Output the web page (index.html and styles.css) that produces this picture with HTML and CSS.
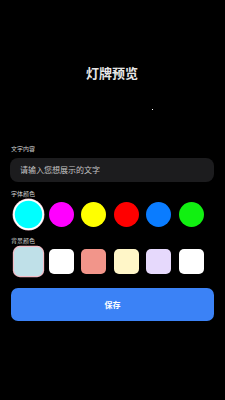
FILE: index.html
```html
<!DOCTYPE html>
<html lang="zh">
<head>
    <meta charset="UTF-8">
    <meta name="viewport" content="width=device-width, initial-scale=1.0">
    <title>灯牌预览</title>
    <link rel="stylesheet" href="styles.css">
</head>
<body>
    <div class="page">
        <h1 class="title">灯牌预览</h1>

        <div class="preview">
            <span class="dot"></span>
        </div>

        <p class="label">文字内容</p>
        <div class="input">请输入您想展示的文字</div>

        <p class="label label-gap">字体颜色</p>
        <div class="swatches">
            <span class="swatch circle selected" style="background:#00ffff"></span>
            <span class="swatch circle" style="background:#ff00ff"></span>
            <span class="swatch circle" style="background:#ffff00"></span>
            <span class="swatch circle" style="background:#ff0000"></span>
            <span class="swatch circle" style="background:#0a7cff"></span>
            <span class="swatch circle" style="background:#11f011"></span>
        </div>

        <p class="label label-gap2">背景颜色</p>
        <div class="swatches">
            <span class="swatch square selected" style="background:#bfe0e8"></span>
            <span class="swatch square" style="background:#ffffff"></span>
            <span class="swatch square" style="background:#f2958a"></span>
            <span class="swatch square" style="background:#fff6c8"></span>
            <span class="swatch square" style="background:#e6d9fc"></span>
            <span class="swatch square" style="background:#ffffff"></span>
        </div>

        <div class="save">保存</div>
    </div>
</body>
</html>
```

FILE: styles.css
```css
body {
    margin: 0;
    background: #000;
    font-family: "Noto Sans CJK SC", "Noto Sans", sans-serif;
    width: 225px;
    height: 400px;
    overflow: hidden;
}

.page {
    padding: 64px 11px 0 10px;
}

.title {
    margin: 0;
    font-size: 13px;
    line-height: 18px;
    font-weight: 700;
    text-align: center;
    color: #e6e6e6;
}

.preview {
    position: relative;
    height: 63px;
}

.dot {
    position: absolute;
    left: 142px;
    top: 27px;
    width: 1px;
    height: 1px;
    background: #fff;
}

.label {
    margin: 0;
    padding-left: 1px;
    font-size: 6px;
    line-height: 8px;
    color: #d0d0d0;
}

.label-gap {
    margin-top: 8px;
}

.label-gap2 {
    margin-top: 9px;
}

.input {
    margin-top: 5px;
    height: 24px;
    line-height: 24px;
    border-radius: 8px;
    background: #1c1c1e;
    color: #c4c4c4;
    font-size: 8px;
    padding-left: 10px;
}

.swatches {
    display: flex;
    gap: 7.5px;
    align-items: center;
    height: 28px;
    margin-top: 2px;
    padding-left: 6px;
}

.swatch {
    width: 25px;
    height: 25px;
    flex: none;
}

.circle {
    border-radius: 50%;
}

.square {
    border-radius: 5px;
}

.circle.selected {
    transform: scale(1.1);
    box-shadow: 0 0 0 1.5px #fff, 0 0 0 2px #e9b7c0;
}

.square.selected {
    transform: scale(1.16);
    box-shadow: 0 0 0 1px #f3bcc6;
}

.save {
    margin-top: 13px;
    margin-left: 1px;
    height: 33px;
    line-height: 33px;
    border-radius: 7px;
    background: #3b82f6;
    color: #fff;
    font-size: 8px;
    font-weight: 700;
    text-align: center;
}
```
